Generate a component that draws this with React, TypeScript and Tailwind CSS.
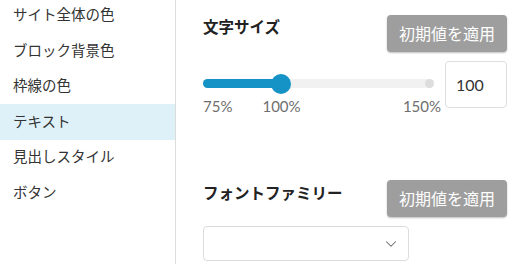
import { ChevronDown } from "lucide-react"

const items = ["サイト全体の色", "ブロック背景色", "枠線の色", "テキスト", "見出しスタイル", "ボタン"]

function ResetButton() {
    return (
        <button className="h-[37px] w-[120px] shrink-0 rounded-[4px] bg-[#9e9e9e] text-[16px] text-white shadow-[0_1px_2px_rgba(0,0,0,0.25)]">
            初期値を適用
        </button>
    )
}

export default function App() {
    return (
        <div className="flex h-[264px] w-[509px] overflow-hidden bg-white font-['Lato','Noto_Sans_CJK_JP',sans-serif] text-[#333]">
            <aside className="w-[176px] shrink-0 border-r border-[#dcdcdc]">
                <ul className="-mt-[2.5px]">
                    {items.map((item) => (
                        <li
                            key={item}
                            className={`flex h-[35.5px] items-center pl-[13px] text-[14.5px] ${item === "テキスト" ? "bg-[#dff1f8]" : ""}`}
                        >
                            {item}
                        </li>
                    ))}
                </ul>
            </aside>

            <main className="flex-1 pl-[27px] pr-[2px] pt-[15px]">
                <section>
                    <div className="flex items-start justify-between">
                        <h2 className="mt-[1px] text-[15.5px] font-bold leading-[22px] text-[#222]">文字サイズ</h2>
                        <ResetButton />
                    </div>
                    <div className="mt-[9px] flex items-start justify-between">
                        <div className="w-[238px]">
                            <div className="relative mt-[18px] h-[9px] w-[231px] rounded-full bg-[#f1f1f1]">
                                <div className="h-full w-[80px] rounded-full bg-[#1592c6]" />
                                <div className="absolute left-[68px] top-[-5.5px] h-[20px] w-[20px] rounded-full bg-[#1592c6]" />
                                <div className="absolute right-0 top-0 h-[9px] w-[9px] rounded-full bg-[#dddddd]" />
                            </div>
                            <div className="mt-[8px] flex text-[15px] leading-[20px] text-[#6e6e6e]">
                                <span>75%</span>
                                <span className="ml-[30px]">100%</span>
                                <span className="ml-auto">150%</span>
                            </div>
                        </div>
                        <div className="flex h-[47px] w-[62px] items-center rounded-[4px] border border-[#dedede] pl-[10px] text-[16px] text-[#333]">
                            100
                        </div>
                    </div>
                </section>

                <section className="mt-[64px]">
                    <div className="flex items-start justify-between">
                        <h2 className="mt-[2px] text-[15.5px] font-bold leading-[22px] text-[#222]">フォントファミリー</h2>
                        <ResetButton />
                    </div>
                    <div className="mt-[9px] flex h-[35px] w-[206px] items-center justify-end rounded-[4px] border border-[#dcdcdc] pr-[8px]">
                        <ChevronDown size={18} strokeWidth={1.4} className="text-[#666]" />
                    </div>
                </section>
            </main>
        </div>
    )
}
